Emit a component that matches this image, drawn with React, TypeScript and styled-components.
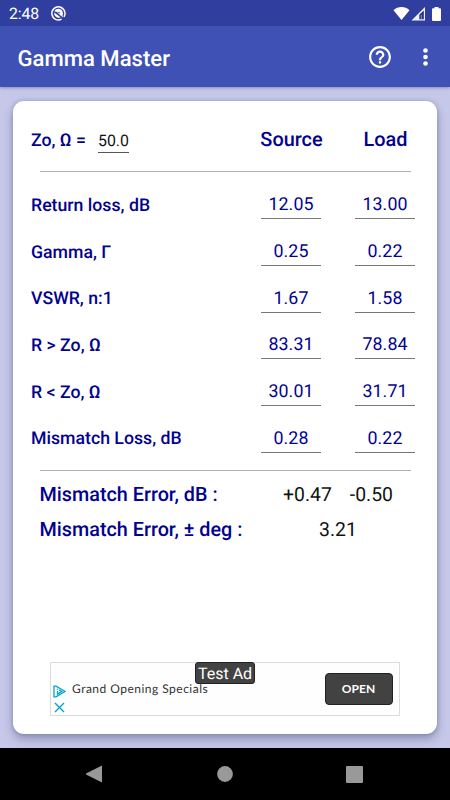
import React from "react";
import styled, { createGlobalStyle } from "styled-components";

const GlobalStyle = createGlobalStyle`
  * { box-sizing: border-box; }
  body { margin: 0; background: #c5c8e8; font-family: Roboto, sans-serif; text-rendering: geometricPrecision; }
`;

const Screen = styled.div`
  width: 450px;
  height: 800px;
  display: flex;
  flex-direction: column;
  overflow: hidden;
  background: #c5c8e8;
`;

const StatusBar = styled.div`
  height: 26px;
  flex: none;
  display: flex;
  align-items: center;
  padding: 1px 8px 0 9px;
  background: #303f9f;
  color: #fff;
`;

const Clock = styled.span`
  width: 41px;
  font-size: 15.8px;
  line-height: 20px;
  letter-spacing: -0.1px;
`;

const StatusIcons = styled.div`
  margin-left: auto;
  display: flex;
  height: 16px;
`;

const AppBar = styled.header`
  height: 61px;
  flex: none;
  display: flex;
  align-items: center;
  padding: 2px 22px 0 17.5px;
  background: #3f51b5;
  box-shadow: 0 1px 3px rgba(30, 35, 90, 0.35);
  color: #fff;
`;

const Title = styled.h1`
  margin: 2px 0 0;
  flex: 1;
  font-size: 22.1px;
  font-weight: 500;
  line-height: 28px;
`;

const Actions = styled.div`
  display: flex;
  align-items: center;
  gap: 31.5px;
  margin-top: -2px;
`;

const Content = styled.main`
  flex: 1;
  min-height: 0;
  padding: 14px 13.5px 14px 13px;
  display: flex;
`;

const Card = styled.section`
  flex: 1;
  display: flex;
  flex-direction: column;
  background: #fff;
  border-radius: 11px;
  box-shadow: 0 5px 10px rgba(40, 44, 90, 0.34), 0 0 4px rgba(40, 44, 90, 0.22);
`;

const HeaderRow = styled.div`
  height: 70px;
  padding: 7px 21.5px 0 18px;
  display: grid;
  grid-template-columns: 67px 163px 60px 60px;
  align-items: center;
`;

const Label = styled.span`
  padding-top: 2px;
  color: #02028f;
  font-size: 17.7px;
  font-weight: 500;
  line-height: 24px;
  white-space: nowrap;
`;

const ImpedanceInput = styled.span`
  width: 31px;
  height: 25px;
  color: #111;
  font-size: 15.9px;
  line-height: 26px;
  text-align: center;
  white-space: nowrap;
  border-bottom: 1px solid #555;
  margin-top: 2px;
`;

const ColumnTitle = styled.span<{ $shift?: number }>`
  color: #02028f;
  font-size: 19.9px;
  font-weight: 500;
  line-height: 24px;
  width: 64px;
  text-align: center;
  margin-left: ${(p) => p.$shift ?? 0}px;
  margin-top: 1px;
`;

const Divider = styled.hr<{ $gap?: number }>`
  height: 1px;
  flex: none;
  width: 371px;
  margin: ${(p) => p.$gap ?? 0}px 0 0 26.5px;
  border: 0;
  background: #b0b0b0;
`;

const Rows = styled.div`
  margin-top: 9.5px;
  height: 280.2px;
  display: grid;
  grid-template-rows: repeat(6, 1fr);
`;

const Row = styled.div`
  display: grid;
  grid-template-columns: 230px 60px 60px;
  padding-left: 18px;
  align-items: center;
`;

const Value = styled.span<{ $load?: boolean }>`
  width: 60px;
  height: 29px;
  margin-left: ${(p) => (p.$load ? 34 : 0)}px;
  color: #02028f;
  font-size: 17.8px;
  line-height: 30px;
  letter-spacing: 0.1px;
  text-align: center;
  border-bottom: 1px solid #777;
`;

const Results = styled.div`
  padding: 6px 0 0 26.5px;
  display: grid;
  grid-template-rows: 35px 35px;
`;

const ResultRow = styled.div`
  display: grid;
  grid-template-columns: 236px 120px;
  align-items: center;
`;

const ResultLabel = styled.span`
  color: #02028f;
  font-size: 19.8px;
  font-weight: 500;
  white-space: nowrap;
`;

const ResultValues = styled.div`
  display: flex;
  justify-content: center;
  gap: 18px;
  padding-left: 5px;
  color: #111;
  font-size: 19.4px;
`;

const AdBanner = styled.aside`
  position: relative;
  width: 350px;
  height: 54px;
  margin: auto 0 18px 37px;
  border: 1px solid #dcdcdc;
  display: flex;
  align-items: center;
  padding: 0 6.5px 0 2px;
  background: #fefefe;
`;

const AdMarks = styled.div`
  display: flex;
  flex-direction: column;
  align-items: center;
  gap: 4px;
  width: 13px;
  margin-top: 19px;
`;

const AdText = styled.span`
  flex: 1;
  margin: -2px 0 0 6px;
  color: #333;
  font-family: Lato, sans-serif;
  font-size: 12px;
  letter-spacing: 0.48px;
`;

const AdButton = styled.button`
  width: 68px;
  height: 32px;
  padding: 0 0 1px;
  border: 1px solid #222;
  border-radius: 4px;
  background: #424242;
  color: #fff;
  font-family: Lato, sans-serif;
  font-size: 12px;
  font-weight: 700;
`;

const AdBadge = styled.span`
  position: absolute;
  left: 144px;
  top: -1px;
  width: 60px;
  height: 22px;
  border: 1px solid #222;
  border-radius: 3px;
  background: #424242;
  color: #fff;
  font-size: 16px;
  line-height: 22px;
  text-align: center;
  white-space: nowrap;
`;

const NavBar = styled.nav`
  height: 52px;
  flex: none;
  background: #000;
  display: flex;
  align-items: center;
  justify-content: space-between;
  padding: 0 87px 0 85px;
`;

const MEASUREMENTS = [
  { label: "Return loss, dB", source: "12.05", load: "13.00" },
  { label: "Gamma, Γ", source: "0.25", load: "0.22" },
  { label: "VSWR, n:1", source: "1.67", load: "1.58" },
  { label: "R > Zo, Ω", source: "83.31", load: "78.84" },
  { label: "R < Zo, Ω", source: "30.01", load: "31.71" },
  { label: "Mismatch Loss, dB", source: "0.28", load: "0.22" },
];

const NotificationIcon = () => (
  <svg width="17" height="17" viewBox="0 0 17 17" fill="none">
    <path d="M11.6 14.2A6.6 6.6 0 1 1 14.1 11.800" stroke="#fff" strokeWidth="1.5" />
    <path d="M4.300 6.400A4.500 4.500 0 0 1 12.500 10.500L13.300 12.500 10.500 10.500 6.500 6.800Z" fill="#fff" />
    <path d="M4.200 7.400 10.500 12.200A4.400 4.400 0 0 1 4.200 7.400Z" fill="#fff" />
    <path d="M7 6.700 9.500 7 10 8.700Z" fill="#303f9f" />
  </svg>
);

const SignalIcons = () => (
  <svg width="50" height="16" viewBox="0 0 50 16">
    <path d="M1.500 4.300C6-.1 13 -.1 17.500 4.300L9.500 14Z" fill="#fff" />
    <path d="M33 1V14.500H19.500Z" fill="#f0f2ff" />
    <path d="M31.800 4.500V13.300H27.300V8.700Z" fill="#202c96" />
    <path d="M29.300 8.800V13.300" stroke="#9aa3d8" strokeWidth=".9" />
    <path d="M42.500 1h4v1.300H48a1 1 0 0 1 1 1V14a1 1 0 0 1-1 1h-7a1 1 0 0 1-1-1V3.300a1 1 0 0 1 1-1h1.500Z" fill="#fff" />
  </svg>
);

const HelpIcon = () => (
  <svg width="24" height="24" viewBox="1 1 22 22">
    <path
      fill="#fff"
      d="M11 18h2v-2h-2v2zm1-16C6.480 2 2 6.480 2 12s4.480 10 10 10 10-4.480 10-10S17.520 2 12 2zm0 18c-4.410 0-8-3.590-8-8s3.590-8 8-8 8 3.590 8 8-3.590 8-8 8zm0-14c-2.210 0-4 1.790-4 4h2c0-1.100.9-2 2-2s2 .9 2 2c0 2-3 1.750-3 5h2c0-2.250 3-2.500 3-5 0-2.210-1.790-4-4-4z"
    />
  </svg>
);

const MoreIcon = () => (
  <svg width="5" height="20" viewBox="0 0 5 20" fill="#fff">
    <circle cx="2.500" cy="3.500" r="2.300" />
    <circle cx="2.500" cy="10" r="2.300" />
    <circle cx="2.500" cy="16.500" r="2.300" />
  </svg>
);

export default function App() {
  return (
    <Screen>
      <GlobalStyle />
      <StatusBar>
        <Clock>2:48</Clock>
        <NotificationIcon />
        <StatusIcons>
          <SignalIcons />
        </StatusIcons>
      </StatusBar>
      <AppBar>
        <Title>Gamma Master</Title>
        <Actions>
          <HelpIcon />
          <MoreIcon />
        </Actions>
      </AppBar>
      <Content>
        <Card>
          <HeaderRow>
            <Label>Zo, Ω =</Label>
            <ImpedanceInput>50.0</ImpedanceInput>
            <ColumnTitle $shift={-1.5}>Source</ColumnTitle>
            <ColumnTitle $shift={32.5}>Load</ColumnTitle>
          </HeaderRow>
          <Divider />
          <Rows>
            {MEASUREMENTS.map((m) => (
              <Row key={m.label}>
                <Label>{m.label}</Label>
                <Value>{m.source}</Value>
                <Value $load>{m.load}</Value>
              </Row>
            ))}
          </Rows>
          <Divider $gap={8.5} />
          <Results>
            <ResultRow>
              <ResultLabel>Mismatch Error, dB :</ResultLabel>
              <ResultValues>
                <span>+0.47</span>
                <span>-0.50</span>
              </ResultValues>
            </ResultRow>
            <ResultRow>
              <ResultLabel>Mismatch Error, ± deg :</ResultLabel>
              <ResultValues>
                <span>3.21</span>
              </ResultValues>
            </ResultRow>
          </Results>
          <AdBanner>
            <AdMarks>
              <svg width="13" height="13" viewBox="0 0 13 13" fill="none" stroke="#00a5cc" strokeWidth="1.300">
                <path d="M12 6.500 3 11.800H1V1.200H3ZM6 5 8.700 6.500 4.500 9V6" />
                <path d="M4.500 3.700V4.800" />
              </svg>
              <svg width="11" height="11" viewBox="0 0 11 11" stroke="#00a5cc" strokeWidth="1.400">
                <path d="M1 1 10 10M10 1 1 10" />
              </svg>
            </AdMarks>
            <AdText>Grand Opening Specials</AdText>
            <AdButton>OPEN</AdButton>
            <AdBadge>Test Ad</AdBadge>
          </AdBanner>
        </Card>
      </Content>
      <NavBar>
        <svg width="18" height="18" viewBox="0 0 18 18">
          <path d="M17 .5V17.500L1 9.500V8.500Z" fill="#999" />
        </svg>
        <svg width="16" height="16" viewBox="0 0 16 16">
          <circle cx="8" cy="8" r="7.900" fill="#999" />
        </svg>
        <svg width="17" height="17" viewBox="0 0 17 17">
          <rect width="17" height="17" rx="1" fill="#999" />
        </svg>
      </NavBar>
    </Screen>
  );
}
